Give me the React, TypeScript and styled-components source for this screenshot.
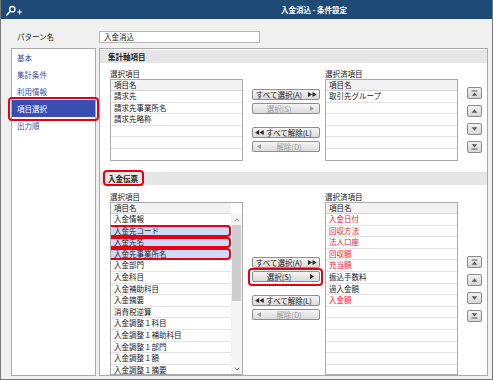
import React from "react";
import styled, { createGlobalStyle, css } from "styled-components";

const Red = "#e50012";

const GlobalStyle = createGlobalStyle`
  html, body {
    margin: 0;
    padding: 0;
    background: #fff;
  }
  body {
    font-family: "Noto Sans CJK JP", "Noto Sans", sans-serif;
    font-size: 7.5px;
    color: #222;
  }
  * {
    box-sizing: border-box;
  }
`;

const Window = styled.div`
  width: 493px;
  height: 380px;
  border: 1px solid #7a7a7a;
  border-top: none;
  background: #f0f0f0;
  display: flex;
  flex-direction: column;
  overflow: hidden;
`;

const TitleBar = styled.div`
  height: 19px;
  flex-shrink: 0;
  background: #1f4a76;
  color: #fff;
  display: flex;
  align-items: center;
  padding-left: 4px;
`;

const Title = styled.div`
  flex: 1;
  text-align: center;
  padding-left: 113px;
  font-weight: bold;
  line-height: 19px;
`;

const PatternRow = styled.div`
  height: 29px;
  flex-shrink: 0;
  display: flex;
  align-items: flex-start;
  padding: 12px 0 0 16px;
`;

const FieldLabel = styled.div`
  width: 82px;
  line-height: 12px;
`;

const TextInput = styled.div`
  width: 161px;
  height: 12px;
  background: #fff;
  border: 1px solid #b4b4b4;
  padding-left: 4px;
  line-height: 10px;
`;

const Body = styled.div`
  flex: 1;
  min-height: 0;
  display: flex;
  gap: 3px;
  padding: 0 4px 3px 10px;
`;

const Nav = styled.div`
  width: 85px;
  flex-shrink: 0;
  background: #fff;
  border: 1px solid #a9a9a9;
  display: flex;
  flex-direction: column;
`;

const marked = css`
  &::after {
    content: "";
    position: absolute;
    z-index: 1;
    border: 2.5px solid ${Red};
    border-radius: 4px;
    pointer-events: none;
  }
`;

const NavItem = styled.div<{ $active?: boolean }>`
  position: relative;
  height: 17px;
  line-height: 17px;
  padding-left: 5px;
  color: #3b4fa8;

  ${({ $active }) =>
    $active &&
    css`
      background: #3c4db1;
      color: #fff;
      ${marked};
      &::after {
        inset: -3px -4px -4px -4px;
      }
    `};
`;

const Main = styled.div`
  flex: 1;
  background: #fff;
  border: 1px solid #a9a9a9;
  padding-top: 1px;
  display: flex;
  flex-direction: column;
`;

const SectionHeader = styled.div<{ $gapTop?: number }>`
  height: 13px;
  line-height: 13px;
  flex-shrink: 0;
  background: #e6e6e6;
  padding-left: 8px;
  font-weight: bold;
  margin-top: ${({ $gapTop }) => $gapTop ?? 0}px;
`;

const HeaderText = styled.span<{ $marked?: boolean }>`
  position: relative;

  ${({ $marked }) =>
    $marked &&
    css`
      ${marked};
      &::after {
        inset: -3px -6px -2px -5px;
      }
    `};
`;

const PickerGrid = styled.div<{ $padTop: number; $listHeight: number }>`
  display: grid;
  grid-template-columns: 133px 9px 68px 5px 133px 9px 15px;
  grid-template-rows: 11px ${({ $listHeight }) => $listHeight}px;
  padding: ${({ $padTop }) => $padTop}px 0 0 10px;
`;

const ColumnLabel = styled.div<{ $col: number }>`
  grid-column: ${({ $col }) => $col};
  grid-row: 1;
  line-height: 11px;
`;

const ListBox = styled.div<{ $col: number }>`
  grid-column: ${({ $col }) => $col};
  grid-row: 2;
  border: 1px solid #a9a9a9;
  background: #fff;
  overflow: hidden;
  display: flex;
`;

const ListRows = styled.div`
  flex: 1;
  min-width: 0;
  display: flex;
  flex-direction: column;
  overflow: hidden;
`;

const HeaderRow = styled.div`
  height: 11px;
  flex-shrink: 0;
  line-height: 10px;
  padding-left: 3px;
  background: #f2f2f2;
  border-bottom: 1px solid #d4d4d4;
`;

const Row = styled.div<{ $red?: boolean; $marked?: boolean }>`
  height: 11.6px;
  flex-shrink: 0;
  line-height: 10.6px;
  padding-left: 3px;
  border-bottom: 1px solid #e3e3e3;
  white-space: nowrap;
  color: ${({ $red }) => ($red ? "#f0141e" : "#222")};

  ${({ $marked }) =>
    $marked &&
    css`
      position: relative;
      background: #cfd8f4;
      ${marked};
      &::after {
        inset: -0.5px 0 -0.5px -3px;
        border-width: 2px;
      }
    `};
`;

const Scrollbar = styled.div`
  width: 11px;
  flex-shrink: 0;
  display: flex;
  flex-direction: column;
  background: #f4f4f4;
`;

const ScrollCap = styled.div`
  height: 11px;
  background: #fff;
  flex-shrink: 0;
`;

const ScrollArrow = styled.div`
  height: 11px;
  flex-shrink: 0;
  display: flex;
  align-items: center;
  justify-content: center;
`;

const ScrollThumb = styled.div`
  height: 76px;
  margin: 0 1px;
  background: #cdcdcd;
`;

const ScrollTrack = styled.div`
  flex: 1;
`;

const ButtonStack = styled.div`
  grid-column: 3;
  grid-row: 2;
  align-self: center;
  display: flex;
  flex-direction: column;
`;

const ButtonPair = styled.div`
  display: flex;
  flex-direction: column;
  gap: 3px;

  & + & {
    margin-top: 13px;
  }
`;

const MoveButton = styled.div<{ $disabled?: boolean; $marked?: boolean }>`
  position: relative;
  height: 11px;
  display: flex;
  align-items: center;
  border: 1px solid #8e8e8e;
  border-radius: 2px;
  background: linear-gradient(#f5f5f5, #dadada);
  color: ${({ $disabled }) => ($disabled ? "#9c9c9c" : "#222")};

  ${({ $marked }) =>
    $marked &&
    css`
      ${marked};
      &::after {
        inset: -4px -4px -5px -5px;
      }
    `};
`;

const ButtonLabel = styled.span<{ $padRight?: number }>`
  flex: 1;
  text-align: center;
  line-height: 9px;
  white-space: nowrap;
  padding-right: ${({ $padRight }) => $padRight ?? 0}px;
`;

const ButtonIcon = styled.span<{ $width: number }>`
  width: ${({ $width }) => $width}px;
  flex-shrink: 0;
  display: flex;
  align-items: center;
  justify-content: center;
`;

const ArrowStack = styled.div`
  grid-column: 7;
  grid-row: 2;
  align-self: center;
  display: flex;
  flex-direction: column;
  gap: 6px;
`;

const ArrowButton = styled.div`
  width: 15px;
  height: 12px;
  border: 1px solid #8a8a8a;
  border-radius: 2px;
  background: linear-gradient(#f2f2f2, #d6d6d6);
  display: flex;
  align-items: center;
  justify-content: center;
`;

const SearchPlusIcon = () => (
  <svg width="18" height="14" viewBox="0 0 18 14">
    <circle cx="7.3" cy="6.2" r="2.7" fill="none" stroke="#fff" strokeWidth="1.3" />
    <path d="M5.3 8.3 L2 11.8" stroke="#fff" strokeWidth="1.6" strokeLinecap="round" />
    <path d="M12.2 9 H17 M14.6 6.6 V11.4" stroke="#fff" strokeWidth="1.1" />
  </svg>
);

const Triangles = ({ dir, count, color }: { dir: "left" | "right"; count: number; color: string }) => {
  const width = count * 4.5;
  const shapes = Array.from({ length: count }, (_, i) => {
    const x = i * 4.5;
    return dir === "right"
      ? `M${x} 0 L${x + 4.2} 2.5 L${x} 5 Z`
      : `M${x + 4.2} 0 L${x} 2.5 L${x + 4.2} 5 Z`;
  });
  return (
    <svg width={width} height="5" viewBox={`0 0 ${width} 5`}>
      <path d={shapes.join(" ")} fill={color} />
    </svg>
  );
};

const OrderIcon = ({ kind }: { kind: "top" | "up" | "down" | "bottom" }) => {
  const paths: Record<string, string> = {
    top: "M0.5 0.5 H6.5 V1.4 H0.5 Z M3.5 2.4 L6.3 5.8 H0.7 Z",
    up: "M3.5 1.2 L6.3 4.8 H0.7 Z",
    down: "M0.7 1.2 H6.3 L3.5 4.8 Z",
    bottom: "M0.7 0.2 H6.3 L3.5 3.6 Z M0.5 4.6 H6.5 V5.5 H0.5 Z",
  };
  return (
    <svg width="7" height="6" viewBox="0 0 7 6">
      <path d={paths[kind]} fill="#5c5c5c" />
    </svg>
  );
};

const Chevron = ({ up }: { up?: boolean }) => (
  <svg width="6" height="4" viewBox="0 0 6 4">
    <path d={up ? "M0.8 3.2 L3 1 L5.2 3.2" : "M0.8 0.8 L3 3 L5.2 0.8"} fill="none" stroke="#8a8a8a" strokeWidth="0.9" />
  </svg>
);

type Item = { label: string; red?: boolean; marked?: boolean };

const fillRows = (items: Item[], total = 16): Item[] => [
  ...items,
  ...Array.from({ length: Math.max(0, total - items.length) }, () => ({ label: "" })),
];

type PickerProps = {
  padTop: number;
  listHeight: number;
  available: Item[];
  chosen: Item[];
  canSelect?: boolean;
  withScroll?: boolean;
};

const Picker = ({ padTop, listHeight, available, chosen, canSelect, withScroll }: PickerProps) => (
  <PickerGrid $padTop={padTop} $listHeight={listHeight}>
    <ColumnLabel $col={1}>選択項目</ColumnLabel>
    <ListBox $col={1}>
      <ListRows>
        <HeaderRow>項目名</HeaderRow>
        {fillRows(available).map((item, i) => (
          <Row key={i} $red={item.red} $marked={item.marked}>
            {item.label}
          </Row>
        ))}
      </ListRows>
      {withScroll && (
        <Scrollbar>
          <ScrollCap />
          <ScrollArrow>
            <Chevron up />
          </ScrollArrow>
          <ScrollThumb />
          <ScrollTrack />
          <ScrollArrow>
            <Chevron />
          </ScrollArrow>
        </Scrollbar>
      )}
    </ListBox>

    <ButtonStack>
      <ButtonPair>
        <MoveButton>
          <ButtonLabel>すべて選択(A)</ButtonLabel>
          <ButtonIcon $width={14}>
            <Triangles dir="right" count={2} color="#2a2a2a" />
          </ButtonIcon>
        </MoveButton>
        <MoveButton $disabled={!canSelect} $marked={canSelect}>
          <ButtonLabel>選択(S)</ButtonLabel>
          <ButtonIcon $width={14}>
            <Triangles dir="right" count={1} color={canSelect ? "#2a2a2a" : "#9c9c9c"} />
          </ButtonIcon>
        </MoveButton>
      </ButtonPair>
      <ButtonPair>
        <MoveButton>
          <ButtonIcon $width={12}>
            <Triangles dir="left" count={2} color="#2a2a2a" />
          </ButtonIcon>
          <ButtonLabel $padRight={6}>すべて解除(L)</ButtonLabel>
        </MoveButton>
        <MoveButton $disabled>
          <ButtonIcon $width={12}>
            <Triangles dir="left" count={1} color="#9c9c9c" />
          </ButtonIcon>
          <ButtonLabel $padRight={6}>解除(D)</ButtonLabel>
        </MoveButton>
      </ButtonPair>
    </ButtonStack>

    <ColumnLabel $col={5}>選択済項目</ColumnLabel>
    <ListBox $col={5}>
      <ListRows>
        <HeaderRow>項目名</HeaderRow>
        {fillRows(chosen).map((item, i) => (
          <Row key={i} $red={item.red}>
            {item.label}
          </Row>
        ))}
      </ListRows>
    </ListBox>

    <ArrowStack>
      <ArrowButton>
        <OrderIcon kind="top" />
      </ArrowButton>
      <ArrowButton>
        <OrderIcon kind="up" />
      </ArrowButton>
      <ArrowButton>
        <OrderIcon kind="down" />
      </ArrowButton>
      <ArrowButton>
        <OrderIcon kind="bottom" />
      </ArrowButton>
    </ArrowStack>
  </PickerGrid>
);

const navItems = ["基本", "集計条件", "利用情報", "項目選択", "出力順"];

const axisAvailable: Item[] = [
  { label: "請求先" },
  { label: "請求先事業所名" },
  { label: "請求先略称" },
];

const axisChosen: Item[] = [{ label: "取引先グループ" }];

const slipAvailable: Item[] = [
  { label: "入金情報" },
  { label: "入金先コード", marked: true },
  { label: "入金先名", marked: true },
  { label: "入金先事業所名", marked: true },
  { label: "入金部門" },
  { label: "入金科目" },
  { label: "入金補助科目" },
  { label: "入金摘要" },
  { label: "消費税逆算" },
  { label: "入金調整１科目" },
  { label: "入金調整１補助科目" },
  { label: "入金調整１部門" },
  { label: "入金調整１額" },
  { label: "入金調整１摘要" },
];

const slipChosen: Item[] = [
  { label: "入金日付", red: true },
  { label: "回収方法", red: true },
  { label: "法人口座", red: true },
  { label: "回収額", red: true },
  { label: "充当額", red: true },
  { label: "振込手数料" },
  { label: "過入金額" },
  { label: "入金額", red: true },
];

export default function App() {
  return (
    <>
      <GlobalStyle />
      <Window>
        <TitleBar>
          <SearchPlusIcon />
          <Title>入金消込 - 条件設定</Title>
        </TitleBar>

        <PatternRow>
          <FieldLabel>パターン名</FieldLabel>
          <TextInput>入金消込</TextInput>
        </PatternRow>

        <Body>
          <Nav>
            {navItems.map((label) => (
              <NavItem key={label} $active={label === "項目選択"}>
                {label}
              </NavItem>
            ))}
          </Nav>

          <Main>
            <SectionHeader>
              <HeaderText>集計軸項目</HeaderText>
            </SectionHeader>
            <Picker padTop={5} listHeight={82} available={axisAvailable} chosen={axisChosen} />

            <SectionHeader $gapTop={11}>
              <HeaderText $marked>入金伝票</HeaderText>
            </SectionHeader>
            <Picker
              padTop={6}
              listHeight={173}
              available={slipAvailable}
              chosen={slipChosen}
              canSelect
              withScroll
            />
          </Main>
        </Body>
      </Window>
    </>
  );
}
